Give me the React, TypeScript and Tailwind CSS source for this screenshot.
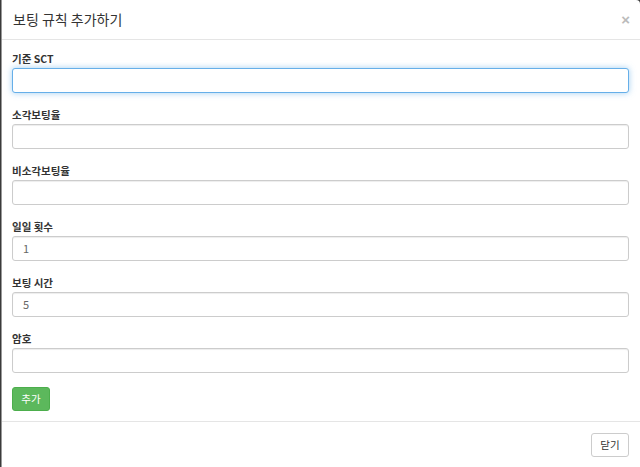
import React from "react";

const font = { fontFamily: '"Noto Sans CJK KR", "Noto Sans", "Liberation Sans", sans-serif' };

function Field({ label, value, focused }: { label: string; value?: string; focused?: boolean }) {
  return (
    <div className="mb-[14px]">
      <div className="text-[10.5px] leading-[15px] font-bold text-[#333] mb-[2px]">{label}</div>
      <div
        className={
          "h-[25px] rounded-[3px] border bg-white flex items-center pl-[10px] text-[11px] text-[#666] " +
          (focused
            ? "border-[#66afe9] shadow-[0_0_6px_rgba(102,175,233,0.6)]"
            : "border-[#ccc] shadow-[inset_0_1px_1px_rgba(0,0,0,0.075)]")
        }
      >
        {value}
      </div>
    </div>
  );
}

export default function App() {
  return (
    <div className="w-[640px] h-[467px] bg-[#3b3b3b] flex overflow-hidden" style={font}>
      <div className="ml-[1px] w-[639px] h-[467px] bg-white border-l border-[#999] rounded-tr-[4px] flex flex-col">
        <div className="h-[40px] border-b border-[#e5e5e5] flex items-center justify-between pl-[11px] pr-[10px] shrink-0">
          <div className="text-[14px] text-[#333]">보팅 규칙 추가하기</div>
          <div className="text-[15px] leading-none text-[#bbb] font-bold" style={{ fontFamily: '"Liberation Sans", sans-serif' }}>×</div>
        </div>
        <div className="pt-[11px] pl-[10px] pr-[11px] pb-[10px] border-b border-[#e5e5e5]">
          <Field label="기준 SCT" focused />
          <Field label="소각보팅율" />
          <Field label="비소각보팅율" />
          <Field label="일일 횟수" value="1" />
          <Field label="보팅 시간" value="5" />
          <Field label="암호" />
          <div className="mt-[1px] w-[38px] h-[24px] rounded-[3px] bg-[#5cb85c] border border-[#4cae4c] text-white text-[10.5px] flex items-center justify-center">
            추가
          </div>
        </div>
        <div className="flex justify-end pt-[11px] pr-[11px]">
          <div className="w-[38px] h-[24px] rounded-[3px] bg-white border border-[#ccc] text-[#333] text-[10.5px] flex items-center justify-center">
            닫기
          </div>
        </div>
      </div>
    </div>
  );
}
